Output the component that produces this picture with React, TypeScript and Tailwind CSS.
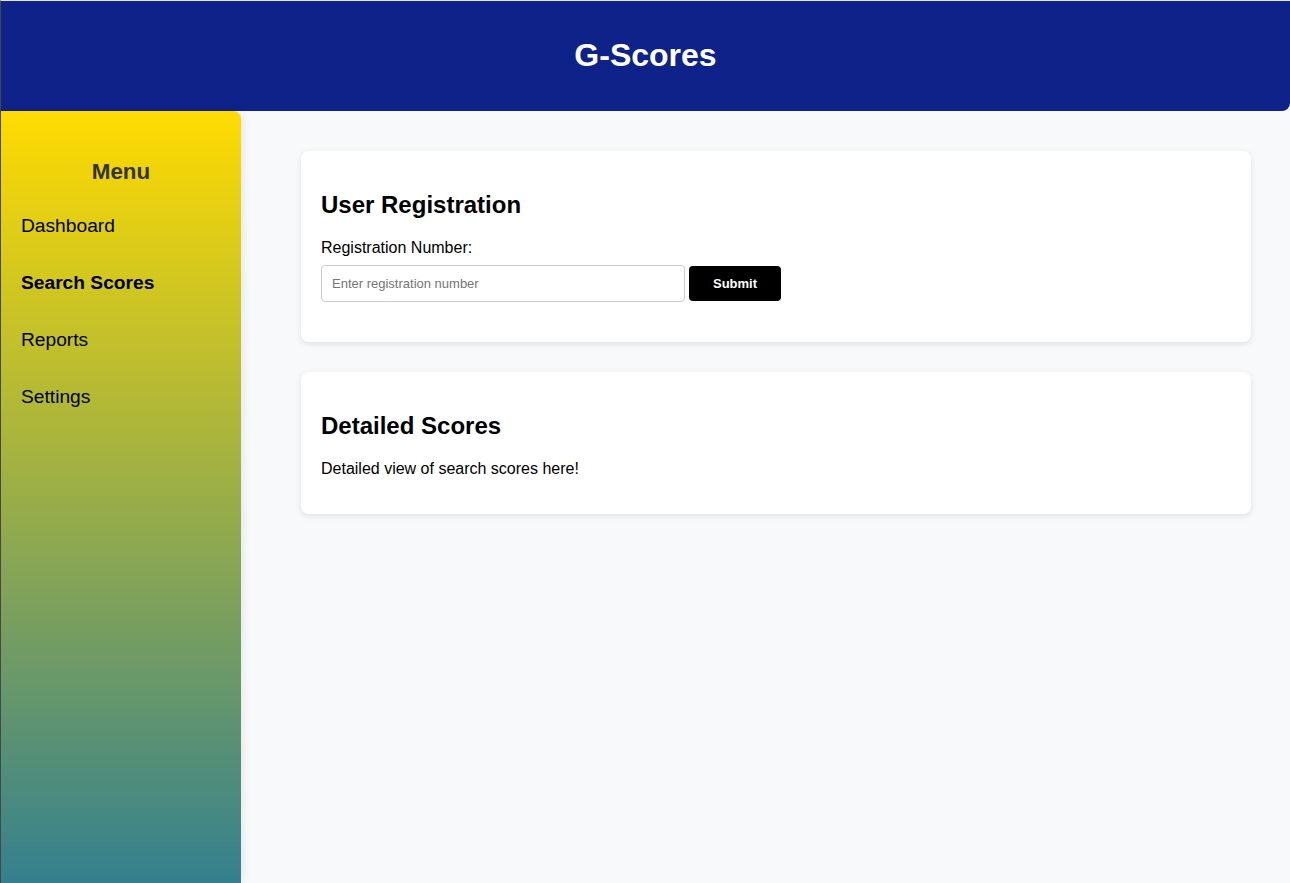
const menuItems = [
  { label: 'Dashboard', active: false },
  { label: 'Search Scores', active: true },
  { label: 'Reports', active: false },
  { label: 'Settings', active: false },
];

function Sidebar() {
  return (
    <aside className="w-[240px] shrink-0 rounded-tr-lg bg-[linear-gradient(to_bottom,#ffdb00,#34808f)] px-5 pt-[48px] shadow-[2px_0_8px_rgba(0,0,0,0.08)]">
      <h3 className="text-center text-[22.4px] leading-[26px] font-bold text-[#333]">Menu</h3>
      <ul className="mt-[30px] flex flex-col gap-[35px]">
        {menuItems.map((item) => (
          <li
            key={item.label}
            className={`text-[19.2px] leading-[22px] text-black ${item.active ? 'font-bold' : ''}`}
          >
            {item.label}
          </li>
        ))}
      </ul>
    </aside>
  );
}

function Card({ children }: { children: React.ReactNode }) {
  return (
    <section className="rounded-lg bg-white px-5 pt-10 pb-5 shadow-[0_2px_6px_rgba(0,0,0,0.1)]">
      {children}
    </section>
  );
}

export default function App() {
  return (
    <div
      className="flex h-[883px] flex-col overflow-hidden border-l border-[#474747] border-t border-t-[#e6e6e6] bg-[#f8f9fa] text-black"
      style={{ fontFamily: '"Liberation Sans", Arial, sans-serif' }}
    >
      <header className="flex h-[110px] shrink-0 items-center justify-center rounded-br-lg bg-[#0e2289] pb-[2px]">
        <h1 className="text-[32px] font-bold text-white">G-Scores</h1>
      </header>
      <div className="flex min-h-0 flex-1">
        <Sidebar />
        <main className="flex flex-1 flex-col gap-[30px] pt-10 pr-[39px] pl-[60px]">
          <Card>
            <h2 className="text-[24px] leading-[28px] font-bold">User Registration</h2>
            <form className="mt-5 mb-5" onSubmit={(e) => e.preventDefault()}>
              <label className="block text-[16px] leading-[18px]">Registration Number:</label>
              <div className="mt-[8px] flex items-start gap-1">
                <input
                  type="text"
                  placeholder="Enter registration number"
                  className="h-[37px] w-[364px] rounded border border-[#ccc] px-[10px] text-[13px] placeholder:text-[#757575] outline-none"
                />
                <button
                  type="submit"
                  className="mt-px h-[35px] w-[92px] rounded bg-black text-[13px] font-bold text-white"
                >
                  Submit
                </button>
              </div>
            </form>
          </Card>
          <Card>
            <h2 className="text-[24px] leading-[28px] font-bold">Detailed Scores</h2>
            <p className="mt-5 mb-4 text-[16px] leading-[18px]">Detailed view of search scores here!</p>
          </Card>
        </main>
      </div>
    </div>
  );
}
